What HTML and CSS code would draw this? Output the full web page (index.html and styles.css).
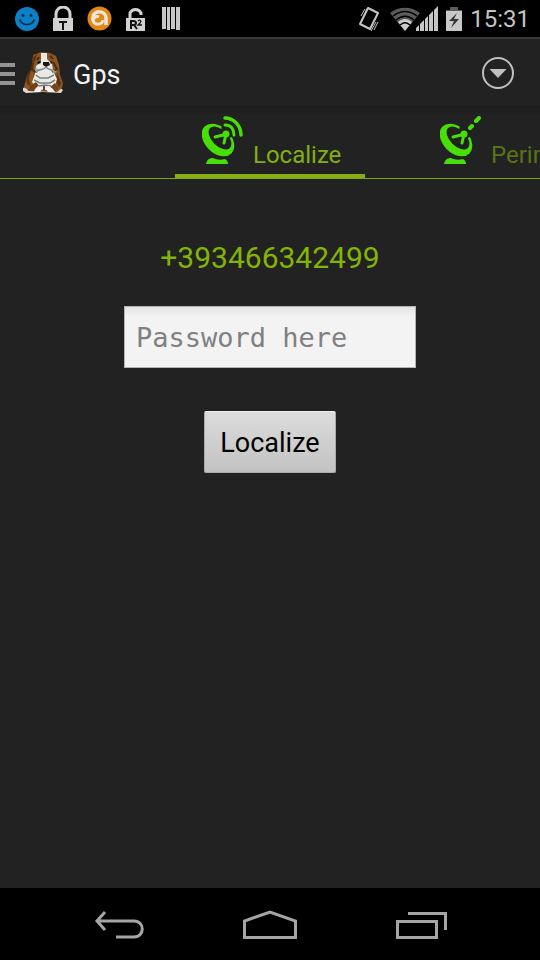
FILE: index.html
```html
<!DOCTYPE html>
<html lang="en">
<head>
<meta charset="utf-8">
<meta name="viewport" content="width=device-width, initial-scale=1">
<title>Gps</title>
<link rel="stylesheet" href="styles.css">
</head>
<body>
<svg class="defs" aria-hidden="true">
  <symbol id="dish" viewBox="0 0 42 50">
    <ellipse cx="16" cy="24" rx="19" ry="13" transform="rotate(45 16 24)" fill="#48df08"/>
    <ellipse cx="18" cy="22" rx="14" ry="8" transform="rotate(45 18 22)" fill="#212121"/>
    <path d="M20 8l10 3v10l-5 2-6-8z" fill="#212121"/>
    <path d="M13 21l8-2 3-1-2 9" fill="none" stroke="#48df08" stroke-width="3" stroke-linecap="round" stroke-linejoin="round"/>
    <circle cx="24" cy="18" r="3.500" fill="#48df08"/>
    <path d="M4 48c1-4 3-6 7-6 4 2 8 2 12 1 2 1 3 3 3 5z" fill="#48df08"/>
  </symbol>
</svg>

<header class="status">
  <div class="notices">
    <svg width="24" height="24" viewBox="0 0 24 24" aria-hidden="true"><circle cx="12" cy="12" r="12" fill="#0b80c6"/><circle cx="8" cy="8.500" r="1.500" fill="#032b45"/><circle cx="16" cy="8.500" r="1.500" fill="#032b45"/><path d="M5 13c2 6 12 6 14 0" fill="none" stroke="#032b45" stroke-width="1.700" stroke-linecap="round"/></svg>
    <svg width="22" height="26" viewBox="0 0 22 26" aria-hidden="true"><path d="M4 13V8a7 7 0 0 1 14 0v5" fill="none" stroke="#d2d2d2" stroke-width="3"/><path d="M1 12h20v13H1z" fill="#d2d2d2"/><path d="M7 15h8v2h-3v7h-2v-7H7z" fill="#111"/></svg>
    <svg width="25" height="25" viewBox="0 0 25 25" aria-hidden="true"><circle cx="12.500" cy="12.500" r="12" fill="#e38710"/><path d="M6 15V11C6 4 19 4 19 12v7" fill="none" stroke="#eee7dc" stroke-width="3.500"/><path d="M16 14c0 5-9 6-10 0 0-3 4-4 6-3" fill="none" stroke="#eee7dc" stroke-width="3"/></svg>
    <svg width="21" height="26" viewBox="0 0 21 26" aria-hidden="true"><path d="M5 13V7a6 6 0 0 1 11 0v2" fill="none" stroke="#d2d2d2" stroke-width="3"/><path d="M1 12h19v13H1z" fill="#d2d2d2"/><g fill="none" stroke="#111" stroke-width="2"><path d="M6 23v-8h2c4 0 4 4 0 4H6M9 19l3 4"/><path d="M13 15c2-2 4 0 2 2l-2 2h4" stroke-width="1.300"/></g></svg>
    <svg class="bars" width="19" height="23" viewBox="0 0 19 23" aria-hidden="true"><path d="M0 0h4v22H0zM5 0h3v23H5zM9 0h4v22H9zM14 0h4v23h-4z" fill="#c6c6c6"/></svg>
  </div>
  <div class="system">
    <svg class="vibrate" width="22" height="26" viewBox="0 0 22 26" aria-hidden="true"><g fill="none" stroke="#c4c4c4"><path d="M10 2l10 5-8 16L2 18z" stroke-width="2" stroke-linejoin="round"/><path d="M3 10l4-7M5 12l4-9M13 25l5-9M16 24l4-8" stroke-width="1"/></g></svg>
    <svg width="30" height="24" viewBox="0 0 30 24" aria-hidden="true"><path d="M15 24L0 6C9-1 21-1 30 6z" fill="#5b5b5b"/><path d="M15 24L8 15c5-4 9-4 14 0z" fill="#ccc"/><path d="M3 9c8-6 16-6 24 0M6 13c6-5 12-5 18 0M10 18c4-3 6-3 10 0" fill="none" stroke="#000" stroke-width="1.300"/></svg>
    <svg class="signal" width="22" height="25" viewBox="0 0 22 25" aria-hidden="true"><path d="M0 25v-3l3-3v6zM4 25v-7l4-4v11zM9 25V13l3-3v15zM13 25V9l4-4v20zM18 25V4l4-4v25z" fill="#c6c6c6"/></svg>
    <svg class="battery" width="16" height="24" viewBox="0 0 16 24" aria-hidden="true"><path d="M4 0h8v3h4v3H0V3h4z" fill="#5c5c5c"/><path d="M0 4h16v20H0z" fill="#c8c8c8"/><path d="M11 6l-8 8h5l-3 7 8-9H8z" fill="#333"/></svg>
    <time class="clock">15:31</time>
  </div>
</header>

<div class="action-bar">
  <button class="home" aria-label="Open navigation">
    <svg width="15" height="24" viewBox="0 0 15 24" aria-hidden="true"><path d="M0 2h15v4H0zM0 11h15v4H0zM0 20h15v4H0z" fill="#949494"/></svg>
    <svg class="dog" width="40" height="42" viewBox="0 0 40 42" aria-hidden="true">
      <path d="M0 36l8-3 24-1 8 6-2 3-18-1-17 1-3-2z" fill="#ddd6d2"/>
      <path d="M10 3L18 0l9 1 6 3 3 9 1 10 3 8-1 5-5 4-28-1-5-4 2-8 4-6 2-7z" fill="#8c5420"/>
      <path d="M9 6l5-4-2 7-3 4zM3 25l4-7-1 10 2 6-4-2zM34 20l4 11-2 5-3-7z" fill="#603410"/>
      <path d="M18 1h6l0 6 5 5 1 6 1 3 3 6-2 7-8 4-10-1-5-7 3-8 1-8 5-4z" fill="#e9e9e6"/>
      <path d="M10 11l-1 7 4 2M30 10l4 7-5 3M16 5l-2 3M27 4l3 3" fill="none" stroke="#4b2e16" stroke-width="2"/>
      <path d="M20 10h6l1 3-4 2-3-2zM14 10l3-1 1 2-3 1zM27 9l3 1-2 2z" fill="#161616"/>
      <path d="M23 15c-2 4-8 1-10 6m10-6c2 4 7 1 9 6M13 23l4 3 8 0 6-3M11 28l6 3h10l5-3M16 34l6-1 6 1" fill="none" stroke="#78827d" stroke-width="1.500"/>
      <path d="M12 16l4 1-3 4zM29 17l5 3-4 1z" fill="#8ca8a5"/>
      <path d="M7 34l6-4 4 5-5 4H5zM26 36l6-5 4 6-6 3z" fill="#754218"/>
      <path d="M15 34l5 2-3 4h-6l1-3zM26 34l-4 2 3 4h7l-2-3z" fill="#f4f1ef"/>
      <path d="M21 34v4" stroke="#55463c" stroke-width="2"/>
    </svg>
  </button>
  <h1 class="title">Gps</h1>
  <button class="more" aria-label="More options">
    <svg width="34" height="34" viewBox="0 0 34 34" aria-hidden="true"><circle cx="17" cy="17" r="15" fill="none" stroke="#c0c0c0" stroke-width="2"/><path d="M8.500 13h17L17 22z" fill="#c0c0c0"/></svg>
  </button>
</div>

<nav class="tabs" aria-label="Sections">
  <a class="tab selected" href="#localize" aria-current="page">
    <svg width="42" height="50" viewBox="0 0 42 50" aria-hidden="true"><use href="#dish"/><g fill="none" stroke="#48df08" stroke-linecap="round"><path d="M23 2c9 0 16 8 16 17" stroke-width="3.500"/><path d="M23 9c6 0 9 4 9 10" stroke-width="3"/></g></svg>
    <span>Localize</span>
  </a>
  <a class="tab next" href="#perimeter">
    <svg width="42" height="50" viewBox="0 0 42 50" aria-hidden="true"><use href="#dish"/><path d="M30 12l2-2M36 5l3-3" fill="none" stroke="#48df08" stroke-width="4" stroke-linecap="round"/></svg>
    <span>Perimeter</span>
  </a>
</nav>

<main class="content" id="localize">
  <form class="form">
    <label class="phone" for="password">+393466342499</label>
    <input class="password" id="password" type="text" placeholder="Password here">
    <button class="submit" type="button">Localize</button>
  </form>
</main>

<footer class="nav-bar">
  <button aria-label="Back"><svg width="52" height="30" viewBox="0 0 52 30" aria-hidden="true"><path d="M13 2L5 11l8 9M5 11h37c11 0 11 16 0 16H24" fill="none" stroke="#a5a5a5" stroke-width="3"/></svg></button>
  <button aria-label="Home"><svg width="56" height="30" viewBox="0 0 56 30" aria-hidden="true"><path d="M2.500 27.500V11L28 2l25.500 9v16.500z" fill="none" stroke="#a5a5a5" stroke-width="3"/></svg></button>
  <button aria-label="Recent apps"><svg width="52" height="30" viewBox="0 0 52 30" aria-hidden="true"><path d="M1.500 11.500h39v16h-39zM12 3.500h37.500V20" fill="none" stroke="#a5a5a5" stroke-width="3"/></svg></button>
</footer>
</body>
</html>
```
FILE: styles.css
```css
* {
  box-sizing: border-box;
}

body {
  margin: 0;
  min-height: 100vh;
  display: flex;
  flex-direction: column;
  background: #222;
  color: #f3f3f3;
  font-family: Roboto, "Noto Sans", sans-serif;
  overflow-x: hidden;
}

svg {
  display: block;
  flex: none;
}

button {
  margin: 0;
  padding: 0;
  border: 0;
  background: none;
  font: inherit;
  color: inherit;
}

.defs {
  position: absolute;
  width: 0;
  height: 0;
}

.status {
  display: flex;
  justify-content: space-between;
  align-items: center;
  height: 37px;
  padding: 0 10px 0 15px;
  background: #000;
}

.notices {
  display: flex;
  align-items: center;
  gap: 13px;
}

.bars {
  margin-left: 3px;
}

.system {
  display: flex;
  align-items: center;
}

.vibrate {
  margin-right: 10px;
}

.signal {
  margin-left: -4px;
}

.battery {
  margin: 0 8px;
}

.clock {
  color: #c4c4c4;
  font-size: 24px;
  font-weight: 400;
  line-height: 36px;
}

.action-bar {
  display: flex;
  align-items: center;
  height: 69px;
  padding-right: 25px;
  border-top: 2px solid #3a3a3a;
  background: #222;
}

.home {
  display: flex;
  align-items: center;
  gap: 8px;
}

.title {
  flex: 1;
  margin: 0 0 0 10px;
  padding-top: 4px;
  font-size: 27px;
  font-weight: 400;
  line-height: 32px;
}

.tabs {
  display: grid;
  grid-template-columns: 1fr 190px 1fr;
  height: 73px;
  border-bottom: 1px solid #7fa616;
  background: linear-gradient(#1c1c1c, #222 10px);
  overflow: hidden;
}

.tab {
  display: flex;
  align-items: flex-start;
  gap: 9px;
  min-width: 0;
  padding: 10px 0 0 27px;
  color: #84ae14;
  font-size: 24px;
  line-height: 28px;
  text-decoration: none;
}

.tab span {
  margin-top: 25px;
}

.selected {
  grid-column: 2;
  border-bottom: 4px solid #84ae14;
}

.next {
  margin-left: 48px;
}

.next span {
  color: #597216;
}

.content {
  flex: 1;
  padding: 61px 16px 24px;
}

.form {
  display: flex;
  flex-direction: column;
  align-items: center;
}

.phone {
  color: #83b405;
  font-size: 30px;
  line-height: 36px;
}

.password {
  width: 292px;
  max-width: 100%;
  height: 62px;
  margin: 30px 0 43px;
  padding: 0 11px;
  border: 1px solid #b4b4b4;
  border-radius: 0;
  outline: 0;
  background: linear-gradient(#e4e4e4, #f3f3f3 10px);
  color: #222;
  font: 27px "DejaVu Sans Mono", monospace;
}

.password::placeholder {
  color: #808080;
  opacity: 1;
}

.submit {
  height: 62px;
  padding: 2px 15px 0;
  border: 1px solid #aaa;
  border-top-color: #eee;
  border-radius: 2px;
  background: linear-gradient(#dcdcdc, #c2c2c2);
  color: #000;
  font-size: 27px;
}

.nav-bar {
  display: flex;
  justify-content: center;
  gap: 98px;
  height: 72px;
  padding-top: 2px;
  background: #000;
}
```
